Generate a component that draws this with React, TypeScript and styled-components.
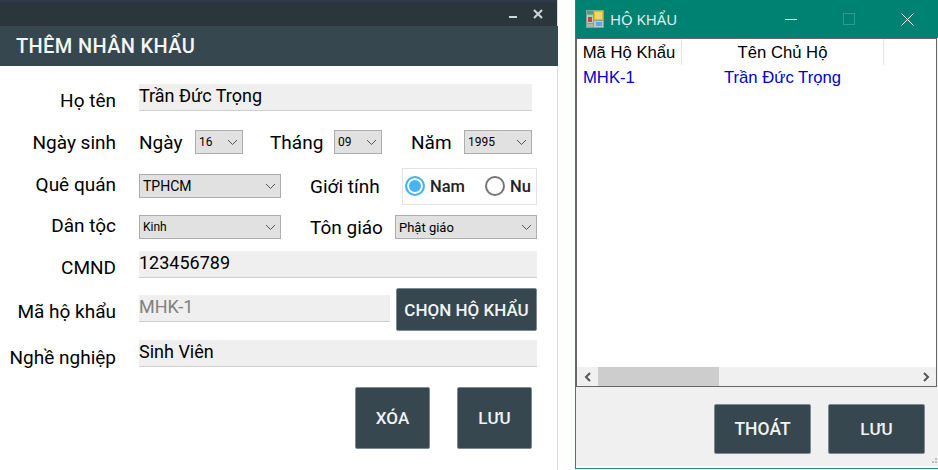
import React from 'react';
import styled, { createGlobalStyle } from 'styled-components';

const GlobalStyle = createGlobalStyle`
  html, body {
    margin: 0;
    padding: 0;
    background: #ffffff;
  }
  body {
    width: 938px;
    height: 470px;
    overflow: hidden;
    font-family: Roboto, "Liberation Sans", sans-serif;
  }
`;

const Page = styled.div`
  display: flex;
  align-items: flex-start;
  width: 938px;
  height: 470px;
  background: #ffffff;
`;

const FormWindow = styled.div`
  width: 558px;
  height: 470px;
  box-sizing: border-box;
  border-right: 1px solid #dcdcdc;
  display: flex;
  flex-direction: column;
`;

const DarkBar = styled.div`
  height: 26px;
  box-sizing: border-box;
  background: #2b363c;
  border-top: 2px solid #2d3a4e;
  display: flex;
  justify-content: flex-end;
  align-items: center;
  gap: 16px;
  padding-right: 14px;
`;

const Header = styled.div`
  height: 40px;
  margin-right: -1px;
  background: #37474f;
  color: #f4f6f6;
  font-size: 20px;
  font-weight: 500;
  letter-spacing: 0.35px;
  line-height: 40px;
  padding-left: 16px;
`;

const Form = styled.div`
  display: flex;
  flex-direction: column;
  padding-top: 18px;
`;

const Row = styled.div<{ $top?: number; $height: number }>`
  display: flex;
  align-items: center;
  height: ${(p) => p.$height}px;
  margin-top: ${(p) => p.$top || 0}px;
`;

const Label = styled.div<{ $shift?: number }>`
  width: 116px;
  margin: ${(p) => p.$shift || 0}px 23px ${(p) => -(p.$shift || 0)}px 0;
  flex-shrink: 0;
  text-align: right;
  font-size: 19px;
  color: #000;
  white-space: nowrap;
`;

const InlineLabel = styled.div<{ $left: number; $width: number }>`
  margin-left: ${(p) => p.$left}px;
  width: ${(p) => p.$width}px;
  flex-shrink: 0;
  font-size: 19px;
  color: #000;
  white-space: nowrap;
`;

const Field = styled.div<{ $width: number; $muted?: boolean }>`
  width: ${(p) => p.$width}px;
  height: 27px;
  box-sizing: border-box;
  background: #efefef;
  border-bottom: 1px solid #cfcfcf;
  font-size: 18px;
  line-height: 24px;
  color: ${(p) => (p.$muted ? '#808080' : '#000')};
`;

const SelectBox = styled.div<{ $width: number; $size?: number }>`
  width: ${(p) => p.$width}px;
  height: 24px;
  flex-shrink: 0;
  box-sizing: border-box;
  background: #e1e1e1;
  border: 1px solid #adadad;
  display: flex;
  align-items: center;
  justify-content: space-between;
  padding: 0 4px 0 3px;
  font-size: ${(p) => p.$size || 12}px;
  color: #000;
  white-space: nowrap;
`;

const RadioGroup = styled.div`
  width: 135px;
  height: 37px;
  flex-shrink: 0;
  box-sizing: border-box;
  border: 1px solid #e3e3e3;
  display: flex;
  align-items: center;
  padding-left: 2px;
  margin-left: 12px;
`;

const RadioDot = styled.span<{ $checked?: boolean; $left?: number }>`
  width: 20px;
  height: 20px;
  margin-left: ${(p) => p.$left || 0}px;
  box-sizing: border-box;
  border-radius: 50%;
  border: 2px solid ${(p) => (p.$checked ? '#45b4f5' : '#757575')};
  background: ${(p) => (p.$checked ? '#45b4f5' : '#fff')};
  box-shadow: ${(p) => (p.$checked ? 'inset 0 0 0 2px #fff' : 'none')};
`;

const RadioText = styled.span`
  margin-left: 5px;
  font-size: 16.5px;
  font-weight: 500;
  color: #222;
`;

const DarkButton = styled.button<{ $width: number; $height: number; $left?: number; $top?: number; $size?: number }>`
  width: ${(p) => p.$width}px;
  height: ${(p) => p.$height}px;
  margin-left: ${(p) => p.$left || 0}px;
  margin-top: ${(p) => p.$top || 0}px;
  flex-shrink: 0;
  padding: 0;
  box-sizing: border-box;
  background: #37474f;
  border: 1px solid #7d8a91;
  border-radius: 2px;
  color: #f1f3f4;
  font-family: Roboto, "Liberation Sans", sans-serif;
  font-size: ${(p) => p.$size || 17}px;
  font-weight: 500;
  white-space: nowrap;
`;

const Actions = styled.div`
  display: flex;
  padding-left: 355px;
  margin-top: 20px;
`;

const ListWindow = styled.div`
  width: 363px;
  height: 469px;
  margin-left: 17px;
  box-sizing: border-box;
  border-left: 1px solid #1f8a7a;
  display: flex;
  flex-direction: column;
  background: #f0f0f0;
`;

const TitleBar = styled.div`
  height: 38px;
  flex-shrink: 0;
  background: #008272;
  color: #e8f4f2;
  display: flex;
  align-items: center;
  font-family: "Open Sans", sans-serif;
  font-size: 15px;
  padding: 0 2px 0 10px;
`;

const TitleText = styled.span`
  margin-left: 6px;
  flex: 1;
`;

const CaptionButton = styled.div`
  width: 58px;
  height: 38px;
  display: flex;
  align-items: center;
  justify-content: center;
`;

const ListView = styled.div`
  width: 361px;
  height: 349px;
  flex-shrink: 0;
  box-sizing: border-box;
  border: 1px solid #666;
  background: #fff;
  display: flex;
  flex-direction: column;
  font-family: "Liberation Sans", sans-serif;
  font-size: 16.67px;
`;

const ListHead = styled.div`
  display: flex;
  height: 26px;
  align-items: center;
  flex-shrink: 0;
`;

const HeadCell = styled.div<{ $width: number }>`
  width: ${(p) => p.$width}px;
  height: 26px;
  line-height: 27px;
  box-sizing: border-box;
  border-right: 1px solid #e5e5e5;
  color: #000;
  text-align: center;
  white-space: nowrap;
`;

const ListRow = styled.div`
  display: flex;
  flex: 1;
  color: #0000cd;
  line-height: 25px;
`;

const RowCell = styled.div<{ $width: number; $left: number }>`
  width: ${(p) => p.$width}px;
  padding-left: ${(p) => p.$left}px;
  box-sizing: border-box;
  white-space: nowrap;
`;

const ScrollBar = styled.div`
  height: 19px;
  flex-shrink: 0;
  background: #f0f0f0;
  display: flex;
  align-items: center;
  justify-content: space-between;
`;

const ScrollArrow = styled.div`
  width: 21px;
  height: 19px;
  flex-shrink: 0;
  display: flex;
  align-items: center;
  justify-content: center;
`;

const ScrollThumb = styled.div`
  width: 121px;
  height: 19px;
  background: #cdcdcd;
`;

const ScrollTrack = styled.div`
  flex: 1;
`;

const ListActions = styled.div`
  position: relative;
  display: flex;
  box-sizing: border-box;
  padding: 17px 0 0 138px;
  gap: 17px;
  height: 79px;
  flex-shrink: 0;
`;

const Grip = styled.svg`
  position: absolute;
  right: 1px;
  bottom: 0;
`;

const BottomEdge = styled.div`
  height: 2px;
  flex-shrink: 0;
  background: #fff;
`;

const BottomLine = styled.div`
  height: 1px;
  flex-shrink: 0;
  background: #1f8a7a;
`;

const Chevron = () => (
  <svg width="11" height="7" viewBox="0 0 11 7">
    <path d="M1 1l4.5 4.5L10 1" fill="none" stroke="#555" strokeWidth="1" />
  </svg>
);

const Select = ({ value, width, size }: { value: string; width: number; size?: number }) => (
  <SelectBox $width={width} $size={size}>
    <span>{value}</span>
    <Chevron />
  </SelectBox>
);

const AppIcon = () => (
  <svg width="18" height="18" viewBox="0 0 18 18">
    <rect x="0" y="0" width="18" height="18" fill="#7fa69a" />
    <rect x="1" y="1" width="6" height="3" fill="#5e9c80" />
    <rect x="1" y="5" width="6" height="8" fill="#b9c9c4" />
    <rect x="2" y="7" width="4" height="5" fill="#c8453f" />
    <rect x="8" y="1" width="9" height="9" fill="#e8b92e" />
    <rect x="9" y="2" width="7" height="7" fill="#f7d65e" />
    <rect x="8" y="11" width="9" height="6" fill="#b9c9c4" />
    <rect x="10" y="12" width="6" height="4" fill="#6f9fdc" />
    <rect x="1" y="14" width="6" height="3" fill="#a3b5b0" />
  </svg>
);

export default function App() {
  return (
    <Page>
      <GlobalStyle />
      <FormWindow>
        <DarkBar>
          <svg width="10" height="10" viewBox="0 0 10 10">
            <path d="M2 8h8" stroke="#cfd6d9" strokeWidth="2" />
          </svg>
          <svg width="10" height="10" viewBox="0 0 10 10">
            <path d="M1 1l8 8M9 1l-8 8" stroke="#cfd6d9" strokeWidth="2" />
          </svg>
        </DarkBar>
        <Header>THÊM NHÂN KHẨU</Header>
        <Form>
          <Row $height={27}>
            <Label $shift={3}>Họ tên</Label>
            <Field $width={393}>Trần Đức Trọng</Field>
          </Row>
          <Row $top={19} $height={24}>
            <Label>Ngày sinh</Label>
            <InlineLabel $left={0} $width={56}>Ngày</InlineLabel>
            <Select value="16" width={48} />
            <InlineLabel $left={27} $width={64}>Tháng</InlineLabel>
            <Select value="09" width={48} />
            <InlineLabel $left={29} $width={53}>Năm</InlineLabel>
            <Select value="1995" width={68} />
          </Row>
          <Row $top={20} $height={24}>
            <Label $shift={-2}>Quê quán</Label>
            <Select value="TPHCM" width={142} size={14} />
            <InlineLabel $left={29} $width={80}>Giới tính</InlineLabel>
            <RadioGroup>
              <RadioDot $checked />
              <RadioText>Nam</RadioText>
              <RadioDot $left={20} />
              <RadioText>Nu</RadioText>
            </RadioGroup>
          </Row>
          <Row $top={17} $height={24}>
            <Label $shift={-2}>Dân tộc</Label>
            <Select value="Kinh" width={142} />
            <InlineLabel $left={29} $width={85}>Tôn giáo</InlineLabel>
            <Select value="Phật giáo" width={142} size={13} />
          </Row>
          <Row $top={12} $height={27}>
            <Label $shift={3}>CMND</Label>
            <Field $width={398}>123456789</Field>
          </Row>
          <Row $top={17} $height={27}>
            <Label $shift={3}>Mã hộ khẩu</Label>
            <Field $width={251} $muted>MHK-1</Field>
            <DarkButton $width={141} $height={43} $left={6} $top={2}>CHỌN HỘ KHẨU</DarkButton>
          </Row>
          <Row $top={18} $height={27}>
            <Label $shift={4}>Nghề nghiệp</Label>
            <Field $width={398}>Sinh Viên</Field>
          </Row>
          <Actions>
            <DarkButton $width={75} $height={62}>XÓA</DarkButton>
            <DarkButton $width={75} $height={62} $left={27}>LƯU</DarkButton>
          </Actions>
        </Form>
      </FormWindow>

      <ListWindow>
        <TitleBar>
          <AppIcon />
          <TitleText>HỘ KHẨU</TitleText>
          <CaptionButton>
            <svg width="12" height="1" viewBox="0 0 12 1">
              <path d="M0 0.5h12" stroke="#ffffff" strokeWidth="1" />
            </svg>
          </CaptionButton>
          <CaptionButton>
            <svg width="12" height="12" viewBox="0 0 12 12">
              <rect x="0.5" y="0.5" width="11" height="11" fill="none" stroke="#2e9b8b" />
            </svg>
          </CaptionButton>
          <CaptionButton>
            <svg width="13" height="13" viewBox="0 0 13 13">
              <path d="M0.5 0.5l12 12M12.5 0.5l-12 12" stroke="#ffffff" strokeWidth="1" />
            </svg>
          </CaptionButton>
        </TitleBar>
        <ListView>
          <ListHead>
            <HeadCell $width={105}>Mã Hộ Khẩu</HeadCell>
            <HeadCell $width={202}>Tên Chủ Hộ</HeadCell>
          </ListHead>
          <ListRow>
            <RowCell $width={105} $left={6}>MHK-1</RowCell>
            <RowCell $width={202} $left={42}>Trần Đức Trọng</RowCell>
          </ListRow>
          <ScrollBar>
            <ScrollArrow>
              <svg width="8" height="10" viewBox="0 0 8 10">
                <path d="M6 1L2 5l4 4" fill="none" stroke="#555" strokeWidth="2" />
              </svg>
            </ScrollArrow>
            <ScrollThumb />
            <ScrollTrack />
            <ScrollArrow>
              <svg width="8" height="10" viewBox="0 0 8 10">
                <path d="M2 1l4 4-4 4" fill="none" stroke="#555" strokeWidth="2" />
              </svg>
            </ScrollArrow>
          </ScrollBar>
        </ListView>
        <ListActions>
          <DarkButton $width={97} $height={50} $size={17.5}>THOÁT</DarkButton>
          <DarkButton $width={97} $height={50}>LƯU</DarkButton>
          <Grip width="6" height="8" viewBox="0 0 6 8">
            <rect x="4" y="0" width="2" height="2" fill="#bdbdbd" />
            <rect x="1" y="3" width="2" height="2" fill="#bdbdbd" />
            <rect x="4" y="3" width="2" height="2" fill="#bdbdbd" />
          </Grip>
        </ListActions>
        <BottomEdge />
        <BottomLine />
      </ListWindow>
    </Page>
  );
}
